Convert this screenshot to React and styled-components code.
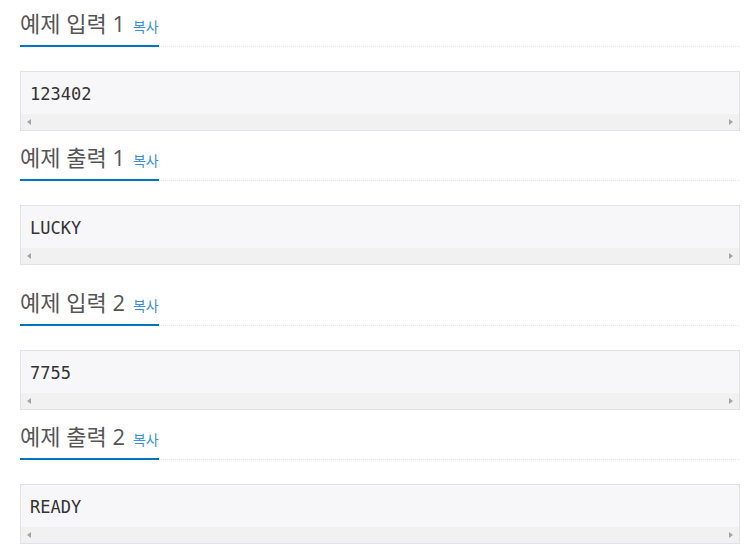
import React from "react";
import styled, { createGlobalStyle } from "styled-components";

const GlobalStyle = createGlobalStyle`
  body {
    margin: 0;
    background: #fff;
    font-family: "Open Sans", "Noto Sans CJK KR", sans-serif;
  }
`;

const Page = styled.div`
  display: flex;
  flex-direction: column;
  gap: 14px;
  width: 720px;
  padding: 11px 8px 0 20px;
`;

const Pair = styled.div`
  display: flex;
  flex-direction: column;
  gap: 14px;
  & + & {
    margin-top: 11px;
  }
`;

const Section = styled.section`
  display: flex;
  flex-direction: column;
`;

const Headline = styled.div`
  display: flex;
  align-items: flex-end;
  border-bottom: 1px dotted #e4e9f0;
  margin-bottom: 24px;
`;

const Title = styled.h2`
  margin: 0 0 -1px;
  padding: 0 0 10px;
  font-size: 22px;
  line-height: 24px;
  font-weight: 400;
  color: #555;
  border-bottom: 2px solid #0076c0;
  white-space: nowrap;
`;

const Copy = styled.span`
  margin-left: 8px;
  font-size: 14px;
  line-height: 1;
  color: #3a8fd9;
  cursor: pointer;
`;

const Pre = styled.div`
  display: flex;
  flex-direction: column;
  background: #f7f7f9;
  border: 1px solid #e1e1e8;
  height: 58px;
`;

const Code = styled.pre`
  flex: 1;
  margin: 0;
  padding: 0 9px;
  overflow: hidden;
  font-family: "DejaVu Sans Mono", monospace;
  font-size: 17px;
  line-height: 44px;
  color: #333;
`;

const Track = styled.div`
  height: 16px;
  background: #f1f1f1;
  display: flex;
  align-items: center;
  justify-content: space-between;
  padding: 0 6px;
`;

const Arrow = styled.span`
  width: 0;
  height: 0;
  border-top: 3.5px solid transparent;
  border-bottom: 3.5px solid transparent;
  border-${(p) => (p.dir === "left" ? "right" : "left")}: 4px solid #a3a3a3;
`;

const samples = [
  [
    { label: "예제 입력 1", value: "123402" },
    { label: "예제 출력 1", value: "LUCKY" },
  ],
  [
    { label: "예제 입력 2", value: "7755" },
    { label: "예제 출력 2", value: "READY" },
  ],
];

function Sample({ label, value }) {
  return (
    <Section>
      <Headline>
        <Title>
          {label}
          <Copy>복사</Copy>
        </Title>
      </Headline>
      <Pre>
        <Code>{value}</Code>
        <Track>
          <Arrow dir="left" />
          <Arrow dir="right" />
        </Track>
      </Pre>
    </Section>
  );
}

export default function App() {
  return (
    <>
      <GlobalStyle />
      <Page>
        {samples.map((pair, i) => (
          <Pair key={i}>
            {pair.map((s) => (
              <Sample key={s.label} {...s} />
            ))}
          </Pair>
        ))}
      </Page>
    </>
  );
}
